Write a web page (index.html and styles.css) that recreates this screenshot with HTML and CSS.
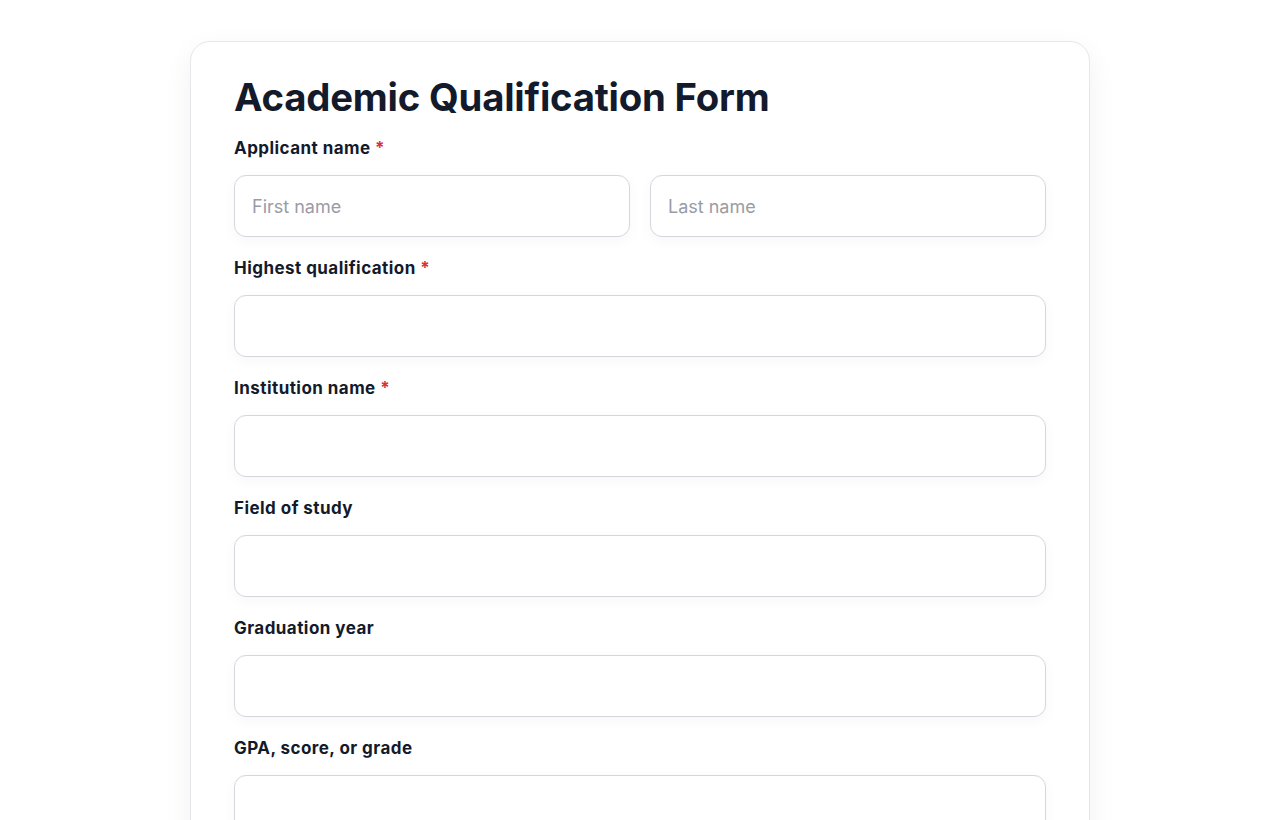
FILE: index.html
```html
<!DOCTYPE html>
<html lang="en">

<head>
    <meta charset="UTF-8">
    <meta name="viewport" content="width=device-width, initial-scale=1.0">
    <title>Academic Qualification Form</title>
    <link rel="stylesheet" href="styles.css">
</head>

<body>
    <div class="form-card">
        <h1 class="form-title">Academic Qualification Form</h1>

        <form id="qualificationForm">
            <div class="form-group">
                <label>Applicant name <span class="required">*</span></label>
                <div class="name-row">
                    <input type="text" name="firstName" placeholder="First name">
                    <input type="text" name="lastName" placeholder="Last name">
                </div>
            </div>

            <div class="form-group">
                <label for="qualification">Highest qualification <span class="required">*</span></label>
                <input type="text" id="qualification" name="qualification">
            </div>

            <div class="form-group">
                <label for="institution">Institution name <span class="required">*</span></label>
                <input type="text" id="institution" name="institution">
            </div>

            <div class="form-group">
                <label for="field">Field of study</label>
                <input type="text" id="field" name="field">
            </div>

            <div class="form-group">
                <label for="year">Graduation year</label>
                <input type="text" id="year" name="year">
            </div>

            <div class="form-group">
                <label for="grade">GPA, score, or grade</label>
                <input type="text" id="grade" name="grade">
            </div>
        </form>
    </div>
</body>

</html>
```

FILE: styles.css
```css
* {
    margin: 0;
    padding: 0;
    box-sizing: border-box;
}

body {
    font-family: Inter, "Noto Sans", sans-serif;
    background: #ffffff;
    color: #131a2b;
    padding-top: 41px;
    display: flex;
    justify-content: center;
}

.form-card {
    width: 900px;
    background: #ffffff;
    border: 1px solid #e6e7eb;
    border-radius: 20px;
    box-shadow: 0 10px 30px rgba(15, 23, 42, 0.06);
    padding: 31px 43px 44px;
}

.form-title {
    font-size: 38.3px;
    font-weight: 700;
    line-height: 48px;
    letter-spacing: -0.2px;
    color: #131a2b;
    margin-bottom: 16px;
}

.form-group {
    margin-bottom: 20px;
}

label {
    display: block;
    font-size: 17px;
    font-weight: 700;
    line-height: 22px;
    letter-spacing: 0.45px;
    margin-bottom: 16px;
    color: #131a2b;
}

.required {
    color: #dc2f3c;
}

.name-row {
    display: flex;
    gap: 20px;
}

input {
    width: 100%;
    height: 62px;
    padding: 0 17px;
    background: #ffffff;
    border: 1px solid #d5d7de;
    border-radius: 12px;
    box-shadow: 0 4px 14px rgba(15, 23, 42, 0.035);
    font-family: inherit;
    font-size: 18px;
    color: #131a2b;
}

input:focus {
    outline: none;
    border-color: #9ca3af;
}

input::placeholder {
    color: #9a9ca5;
}
```
